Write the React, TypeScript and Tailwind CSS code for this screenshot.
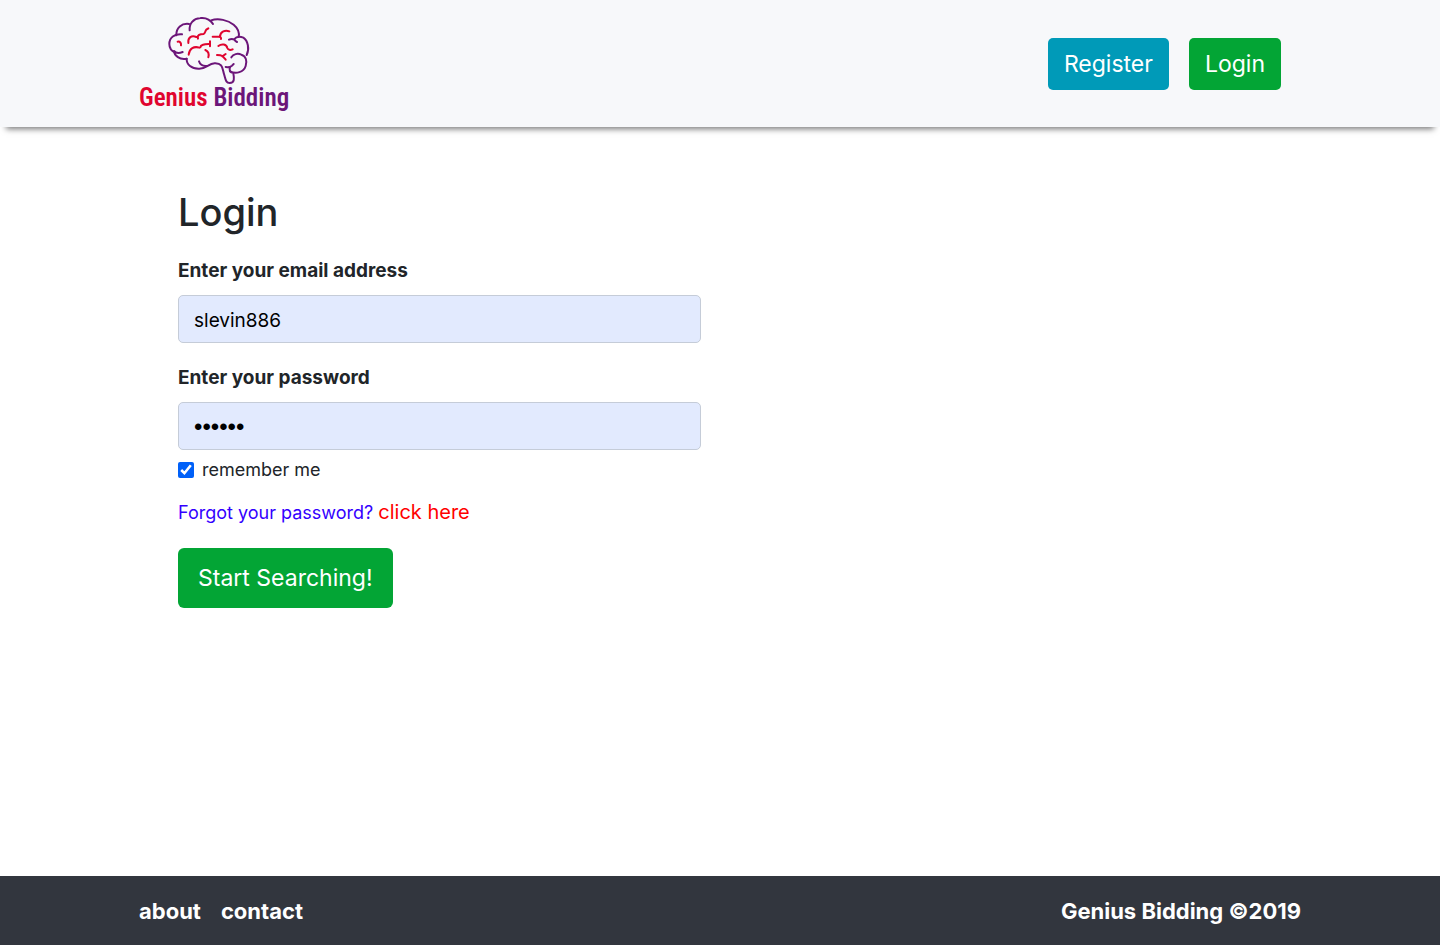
import { useState } from "react";

function BrainMark() {
  return (
    <svg
      className="h-[70px] w-[84px]"
      viewBox="110 30 252 210"
      fill="none"
      strokeLinecap="round"
      strokeLinejoin="round"
      strokeWidth="6"
      aria-hidden="true"
    >
      <g stroke="#6c1679">
        <path d="M178 76C176 55 189 41 210 39C227 37 240 44 248 57" />
        <path d="M242 46C264 39 293 45 310 59C322 69 328 81 325 96" />
        <path d="M176 57C154 54 137 69 138 91" />
        <path d="M155 88C132 86 117 98 117 117C117 129 124 138 134 142" />
        <path d="M157 141C147 145 136 144 131 138C132 153 148 165 169 161" />
        <path d="M169 161C168 179 184 192 207 191C230 191 233 176 253 175C277 174 276 190 281 207C286 223 286 234 298 234C313 234 312 220 309 205" />
        <path d="M206 169C209 179 216 184 229 183" />
        <path d="M296 104C302 101 307 101 312 104C314 107 316 109 320 111M311 103C318 95 329 94 339 98C353 107 358 132 349 150" />
        <path d="M303 157C309 147 322 144 333 149C347 153 351 168 346 183C340 202 317 208 299 199" />
        <path d="M286 186C293 187 299 187 305 182L310 177M300 186C296 192 298 199 303 202" />
      </g>
      <g stroke="#e0052f">
        <path d="M174 114C172 97 184 90 198 96M203 101C199 89 210 87 220 87C225 84 224 79 228 74L234 70" />
        <path d="M142 110C149 109 153 114 152 121" />
        <path d="M175 149C177 130 191 123 207 128M210 127C211 118 224 118 239 117M239 109L239 124" />
        <path d="M225 135C234 139 237 146 234 157" />
        <path d="M247 95L265 95C271 95 273 99 272 102M269 94C270 79 285 74 297 79" />
        <path d="M264 123C274 115 289 117 291 129C293 135 300 136 307 133" />
        <path d="M260 150L270 151C277 152 280 157 286 164M276 154L286 147" />
      </g>
    </svg>
  );
}

function Header() {
  return (
    <header className="bg-[#f7f8fa] shadow-[0_8px_6px_-6px_#777]">
      <div className="mx-auto flex h-[127px] max-w-[1162px] items-center justify-between">
        <a href="#home" className="flex h-[98px] flex-col">
          <span className="pl-7">
            <BrainMark />
          </span>
          <span className="font-['Roboto_Condensed','DejaVu_Sans_Condensed',sans-serif] text-[25px] leading-[26px] font-semibold whitespace-nowrap">
            <span className="text-[#e0052f]">Genius</span>{" "}
            <span className="text-[#6c1679]">Bidding</span>
          </span>
        </a>
        <nav className="flex gap-5 pr-5 text-[23px] leading-9 text-white">
          <a href="#register" className="rounded-[5px] bg-[#009ab8] px-4 py-2">
            Register
          </a>
          <a href="#login" className="rounded-[5px] bg-[#03a535] px-4 py-2">
            Login
          </a>
        </nav>
      </div>
    </header>
  );
}

function LoginForm() {
  const [email, setEmail] = useState("slevin886");
  const [password, setPassword] = useState("secret");
  const [remember, setRemember] = useState(true);
  const field =
    "h-12 w-full rounded-[5px] border border-[#c5ccd8] bg-[#e2eafe] px-[15px] pt-0.5 text-black outline-none";

  return (
    <form
      className="pt-[61px] pr-[19px] pl-[39px]"
      onSubmit={(event) => event.preventDefault()}
    >
      <h1 className="text-[38px] leading-12 font-medium">Login</h1>
      <div className="mt-[21px] flex flex-col gap-2.5">
        <label htmlFor="email" className="text-[19px] leading-7 font-bold">
          Enter your email address
        </label>
        <input
          id="email"
          type="text"
          value={email}
          onChange={(event) => setEmail(event.target.value)}
          className={`${field} text-[19px]`}
        />
      </div>
      <div className="mt-[21px] flex flex-col gap-2.5">
        <label htmlFor="password" className="text-[19px] leading-7 font-bold">
          Enter your password
        </label>
        <input
          id="password"
          type="password"
          value={password}
          onChange={(event) => setPassword(event.target.value)}
          className={`${field} font-['Liberation_Sans',sans-serif] text-[24px]`}
        />
      </div>
      <div className="mt-1 flex items-center gap-2 text-[18px] leading-8">
        <input
          id="remember"
          type="checkbox"
          checked={remember}
          onChange={(event) => setRemember(event.target.checked)}
          className="size-4 accent-[#0060f8]"
        />
        <label htmlFor="remember">remember me</label>
      </div>
      <p className="mt-3 text-[18px] leading-7 text-[#3300ff]">
        Forgot your password?{" "}
        <a href="#reset" className="text-[20px] text-[#ff0000]">
          click here
        </a>
      </p>
      <button
        type="submit"
        className="mt-[21px] rounded-[6px] bg-[#03a535] px-5 py-3 text-[23px] leading-9 text-white"
      >
        Start Searching!
      </button>
    </form>
  );
}

export default function App() {
  return (
    <div className="flex min-h-screen flex-col bg-white font-['Inter',sans-serif] text-[#212529]">
      <Header />
      <main className="mx-auto grid w-full max-w-[1162px] flex-1 md:grid-cols-2">
        <LoginForm />
      </main>
      <footer className="bg-[#32363e]">
        <div className="mx-auto flex h-[69px] max-w-[1162px] items-center justify-between text-[22px] leading-8 font-bold text-white">
          <nav className="flex gap-5">
            <a href="#about">about</a>
            <a href="#contact">contact</a>
          </nav>
          <p>Genius Bidding ©2019</p>
        </div>
      </footer>
    </div>
  );
}
